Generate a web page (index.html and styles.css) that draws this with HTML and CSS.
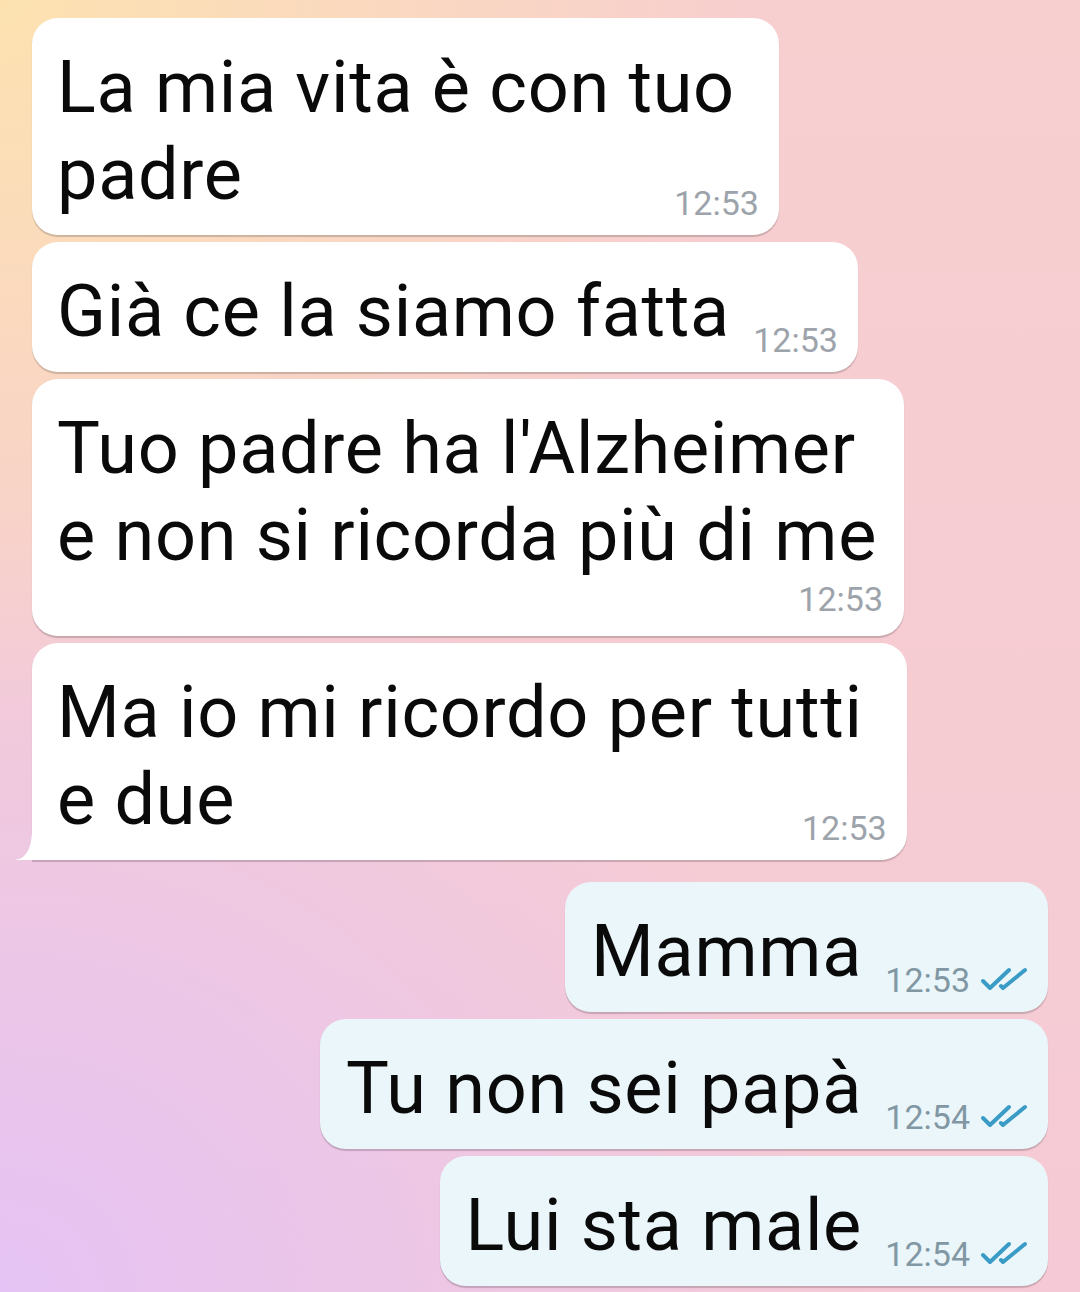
FILE: index.html
```html
<!DOCTYPE html>
<html lang="it">
<head>
  <meta charset="UTF-8">
  <meta name="viewport" content="width=device-width, initial-scale=1.0">
  <title>Chat</title>
  <link rel="stylesheet" href="styles.css">
</head>
<body>
  <div class="chat">
    <div class="group">
      <div class="msg in wrapped">
        <p class="text">La mia vita è con tuo<br>padre</p>
        <span class="meta">12:53</span>
      </div>
      <div class="msg in single">
        <p class="text">Già ce la siamo fatta</p>
        <span class="meta">12:53</span>
      </div>
      <div class="msg in below">
        <p class="text">Tuo padre ha l'Alzheimer<br>e non si ricorda più di me</p>
        <span class="meta">12:53</span>
      </div>
      <div class="msg in wrapped tail">
        <p class="text">Ma io mi ricordo per tutti<br>e due</p>
        <span class="meta">12:53</span>
      </div>
    </div>

    <div class="group out-group">
      <div class="msg out single">
        <p class="text">Mamma</p>
        <span class="meta">12:53
          <svg class="ticks" viewBox="0 0 50 26"><path d="M3 14 L10 21 L29 3"/><path d="M21 19 L23 21 L45 3"/></svg>
        </span>
      </div>
      <div class="msg out single">
        <p class="text">Tu non sei papà</p>
        <span class="meta">12:54
          <svg class="ticks" viewBox="0 0 50 26"><path d="M3 14 L10 21 L29 3"/><path d="M21 19 L23 21 L45 3"/></svg>
        </span>
      </div>
      <div class="msg out single">
        <p class="text">Lui sta male</p>
        <span class="meta">12:54
          <svg class="ticks" viewBox="0 0 50 26"><path d="M3 14 L10 21 L29 3"/><path d="M21 19 L23 21 L45 3"/></svg>
        </span>
      </div>
    </div>
  </div>
</body>
</html>
```

FILE: styles.css
```css
* {
  margin: 0;
  padding: 0;
  box-sizing: border-box;
}
html, body {
  height: 100%;
}
body {
  font-family: Roboto, 'Noto Sans', sans-serif;
  color: #0a0a0a;
  background:
    radial-gradient(ellipse 70% 55% at 0% 0%, #fde2b0 0%, rgba(253,226,176,0) 100%),
    radial-gradient(ellipse 80% 60% at 0% 100%, #e5c3f4 0%, rgba(229,195,244,0) 100%),
    linear-gradient(#f7cfcf, #f5cad6);
  overflow: hidden;
}
.chat {
  padding: 18px 32px 0 32px;
  display: flex;
  flex-direction: column;
  gap: 22px;
}
.group {
  display: flex;
  flex-direction: column;
  align-items: flex-start;
  gap: 7px;
}
.out-group {
  align-items: flex-end;
}
.msg {
  position: relative;
  background: #fff;
  border-radius: 26px;
  padding: 26px 27px 17px 25px;
  box-shadow: 0 2px 1px rgba(0,0,0,0.18);
}
.msg.out {
  background: #ebf6fa;
  padding-left: 26px;
}
.text {
  font-size: 72px;
  line-height: 87px;
  letter-spacing: 0.7px;
}
.single .text {
  margin-right: 101px;
}
.out.single .text {
  margin-right: 159px;
}
.wrapped {
  padding-right: 44px;
}
.meta {
  position: absolute;
  right: 20px;
  bottom: 15px;
  font-size: 34px;
  line-height: 34px;
  color: #9ca3aa;
  display: flex;
  align-items: center;
  gap: 10px;
}
.out .meta {
  right: 18px;
  color: #8198a4;
}
.below .meta {
  position: static;
  display: block;
  text-align: right;
  line-height: 40px;
  margin-right: -6px;
}
.ticks {
  width: 50px;
  height: 26px;
  fill: none;
  stroke: #3a9cc6;
  stroke-width: 4;
  stroke-linecap: round;
  stroke-linejoin: round;
}
.tail {
  border-bottom-left-radius: 0;
}
.tail::before {
  content: "";
  position: absolute;
  left: -16px;
  bottom: 0;
  width: 16px;
  height: 26px;
  background: radial-gradient(ellipse 16px 26px at 0 0, rgba(255,255,255,0) 96%, #fff 100%);
}
```
